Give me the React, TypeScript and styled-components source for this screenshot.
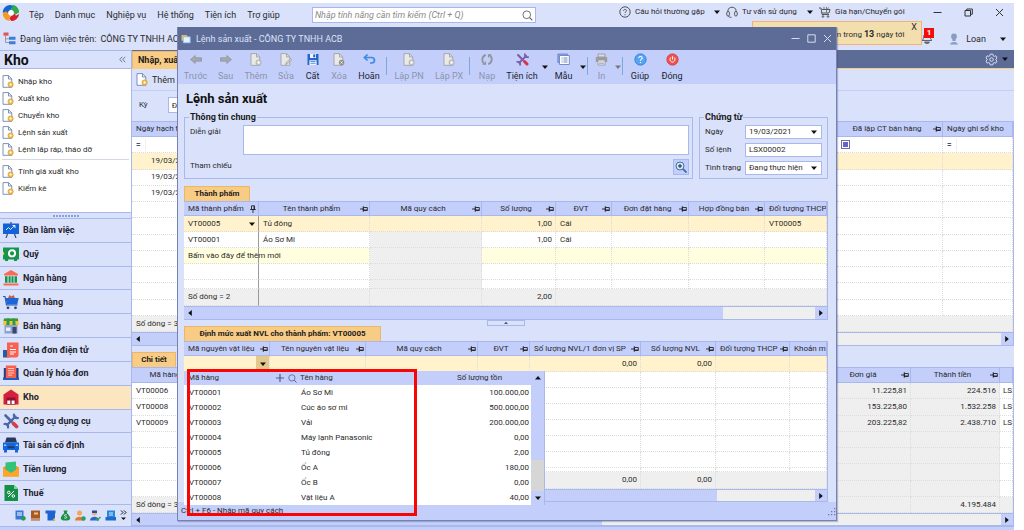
import React from 'react';
import styled, { createGlobalStyle, css } from 'styled-components';

const c = {
  window: '#d9e1fb',
  header: '#c3cffa',
  dark: '#5d6b97',
  line: '#a9b8ea',
  orange: '#f8cc84',
  orangeLine: '#e9b76a',
  yellow: '#fff2cc',
  pale: '#ffffdf',
  grey: '#efefef',
  dot: '#dcdcdc',
  text: '#2b2b2b',
  mute: '#8b93ad',
};

const Global = createGlobalStyle`
  *, *::before, *::after { box-sizing: border-box; }
  body { margin: 0; background: #fff; color: ${c.text}; font: 8px/12px Roboto, "Liberation Sans", sans-serif; }
  button, input, textarea, select { font: inherit; color: inherit; margin: 0; padding: 0; border: 0; border-radius: 0; background: none; outline: 0; }
  svg { display: block; flex: none; }
  a { color: inherit; text-decoration: none; }
`;

/* ---------- window frame ---------- */

const Page = styled.div`
  display: flex;
  min-height: 100vh;
  padding: 3px 10px 0 0;
`;
const Window = styled.div`
  position: relative;
  flex: 1;
  min-width: 0;
  display: flex;
  flex-direction: column;
  background: ${c.window};
  overflow: hidden;
`;
const MenuBar = styled.header`
  display: flex;
  align-items: flex-start;
  height: 24px;
  padding-left: 2px;
  font-size: 9px;
`;
const Menu = styled.nav`
  display: flex;
  gap: 11px;
  padding: 6px 0 0 9px;
`;
const PlainButton = styled.button`
  white-space: nowrap;
  display: flex;
  align-items: center;
`;
const SearchBox = styled.div`
  display: flex;
  align-items: center;
  width: 224px;
  height: 16px;
  margin: 4px 0 0 32px;
  padding: 0 2px;
  background: #fff;
  border: 1px solid ${c.line};
`;
const SearchInput = styled.input`
  flex: 1;
  min-width: 0;
  font-size: 9px;
  font-style: italic;
  &::placeholder { color: #8a8a8a; opacity: 1; }
`;
const MenuRight = styled.div`
  display: flex;
  align-items: center;
  margin-left: auto;
  padding: 2px 10px 0 0;
  font-size: 8px;
`;
const HelpLink = styled.button<{ $w: number }>`
  display: flex;
  align-items: center;
  gap: 4px;
  width: ${p => p.$w}px;
  height: 14px;
  white-space: nowrap;
`;
const Push = styled.span`
  flex: 1;
`;
const WindowKeys = styled.div<{ $gap: number }>`
  display: flex;
  gap: ${p => p.$gap}px;
`;
const ContextBar = styled.div`
  display: flex;
  align-items: center;
  height: 23px;
  padding: 0 8px 0 3px;
  font-size: 9px;
  white-space: nowrap;
`;
const Company = styled.span`
  margin-left: 4px;
`;
const UserButton = styled.button`
  display: flex;
  align-items: center;
  gap: 7px;
  margin-left: 16px;
  font-size: 9px;
`;
const Bell = styled.button`
  position: relative;
  margin-left: auto;
`;
const Badge = styled.b`
  position: absolute;
  top: -4px;
  left: 3px;
  width: 10px;
  height: 10px;
  background: #f20d0d;
  color: #fff;
  font-size: 8px;
  line-height: 10px;
  text-align: center;
`;
const Notice = styled.div`
  position: absolute;
  top: 18px;
  right: 92px;
  display: flex;
  justify-content: flex-end;
  gap: 7px;
  width: 170px;
  height: 24px;
  padding: 0 4px;
  background: #f3dfae;
  border: 1px solid #f3b27a;
  white-space: nowrap;
`;
const NoticeText = styled.span`
  padding-top: 6px;
  b { font-size: 9px; }
`;
const NoticeClose = styled.button`
  height: 10px;
  font-size: 9px;
  line-height: 10px;
`;
const Body = styled.div`
  flex: 1;
  display: flex;
`;
const BottomEdge = styled.div`
  height: 4px;
  background: ${c.header};
  border-top: 1px solid ${c.line};
`;

/* ---------- sidebar ---------- */

const Sidebar = styled.aside`
  display: flex;
  flex-direction: column;
  width: 132px;
  flex: none;
  border-right: 1px solid ${c.line};
`;
const SideTitle = styled.div`
  display: flex;
  align-items: center;
  justify-content: space-between;
  height: 19px;
  padding: 0 5px 0 4px;
  border-bottom: 1px solid ${c.line};
  border-top: 1px solid ${c.line};
  color: #111;
  h2 { margin: 0; font-size: 14px; line-height: 16px; }
`;
const SideList = styled.ul`
  list-style: none;
  height: 144px;
  margin: 0;
  padding: 4px 2px;
  background: #fff;
  border-bottom: 1px solid ${c.line};
`;
const SideItem = styled.li<{ $rule?: boolean }>`
  ${p => p.$rule && css`margin-top: 1px; padding-top: 3px; border-top: 1px solid #d5d8e2;`}
  a { display: flex; align-items: center; gap: 4px; height: 17px; }
`;
const Grip = styled.div`
  display: flex;
  align-items: center;
  justify-content: center;
  height: 5px;
  &::after { content: ''; width: 26px; height: 2px; background: repeating-linear-gradient(90deg, #8aa0de 0 2px, transparent 2px 3px); }
`;
const Modules = styled.nav`
  flex: 1;
  display: flex;
  flex-direction: column;
`;
const ModuleLink = styled.a<{ $on?: boolean }>`
  flex: 1;
  display: flex;
  align-items: center;
  gap: 4px;
  min-height: 20px;
  padding-left: 3px;
  border-top: 1px solid ${c.line};
  background: ${p => (p.$on ? '#fce6bf' : 'transparent')};
  color: #1f2330;
  font-size: 9px;
  font-weight: 700;
`;
const Shortcuts = styled.div`
  display: flex;
  align-items: center;
  gap: 4px;
  height: 22px;
  padding-left: 15px;
  border-top: 1px solid ${c.line};
`;

/* ---------- main list behind the dialog ---------- */

const Main = styled.main`
  flex: 1;
  min-width: 0;
  display: flex;
  flex-direction: column;
`;
const TabStrip = styled.div`
  display: flex;
  align-items: flex-end;
  height: 19px;
  background: ${c.dark};
  border-bottom: 1px solid ${c.orange};
`;
const Tab = styled.button<{ $w: number; $tall?: boolean }>`
  width: ${p => p.$w}px;
  height: ${p => (p.$tall ? 17 : 15)}px;
  padding: 0 5px;
  background: ${c.orange};
  border: 1px solid ${c.orangeLine};
  border-bottom: 0;
  color: #1c1c1c;
  font-size: ${p => (p.$tall ? 9 : 8)}px;
  font-weight: 700;
  text-align: ${p => (p.$tall ? 'left' : 'center')};
  white-space: nowrap;
`;
const TabGear = styled.button`
  display: flex;
  align-items: center;
  gap: 4px;
  height: 18px;
  margin-left: auto;
  padding-right: 6px;
  color: #dfe6fb;
`;
const MainTools = styled.div`
  display: flex;
  align-items: center;
  height: 22px;
  padding-left: 4px;
  border-bottom: 1px solid ${c.header};
  font-size: 9px;
`;
const Period = styled.div`
  display: flex;
  align-items: center;
  gap: 20px;
  height: 30px;
  padding: 0 7px 2px;
  font-size: 8px;
`;
const PeriodInput = styled.input`
  width: 90px;
  height: 16px;
  padding: 0 3px;
  background: #fff;
  border: 1px solid ${c.line};
`;
const MainTabs = styled.div`
  height: 21px;
  padding-top: 6px;
`;

/* ---------- grids ---------- */

const Grid = styled.table<{ $h?: number }>`
  width: 100%;
  ${p => p.$h && css`height: ${p.$h}px;`}
  table-layout: fixed;
  border-collapse: separate;
  border-spacing: 0;
  background: #fff;
  border-right: 1px solid ${c.line};
`;
const Col = styled.col<{ $w?: number }>`
  ${p => p.$w && css`width: ${p.$w}px;`}
`;
const Row = styled.tr<{ $tone?: string; $h?: number }>`
  height: ${p => p.$h ?? 16}px;
  background: ${p => p.$tone ?? 'transparent'};
`;
const Th = styled.th`
  height: inherit;
  padding: 0 1px 0 4px;
  background: ${c.header};
  border-right: 1px solid ${c.line};
  border-bottom: 1px solid ${c.line};
  border-top: 1px solid ${c.line};
  font-weight: 400;
  overflow: hidden;
  white-space: nowrap;
`;
const ThInner = styled.div<{ $left?: boolean }>`
  display: flex;
  align-items: center;
  span { flex: 1; text-align: ${p => (p.$left ? 'left' : 'center')}; }
`;
const Td = styled.td<{ $right?: boolean; $shade?: boolean; $frozen?: boolean; $indent?: boolean }>`
  height: inherit;
  padding: 0 3px 0 ${p => (p.$indent ? 19 : 4)}px;
  border-right: 1px dotted ${c.dot};
  border-bottom: 1px dotted ${c.dot};
  line-height: 12px;
  text-align: ${p => (p.$right ? 'right' : 'left')};
  white-space: nowrap;
  ${p => p.$shade && css`background: ${c.grey};`}
  ${p => p.$frozen && css`border-right: 1px solid #9a9a9a;`}
`;
const EdgeTd = styled(Td)`
  padding: 0 0 0 3px;
`;
const DropTd = styled(Td)`
  padding: 0;
`;
const CellCombo = styled.div`
  display: flex;
  align-items: center;
  justify-content: space-between;
`;
const DropCell = styled.button`
  display: flex;
  align-items: center;
  justify-content: center;
  width: 13px;
  height: 15px;
  margin-left: auto;
  background: #e3c98d;
`;
const FilterMark = styled.span`
  display: inline-block;
  width: 10px;
  border-right: 1px solid ${c.grey};
  color: #4b4b86;
  font-weight: 700;
`;
const TriCheck = styled.input`
  appearance: none;
  display: block;
  width: 9px;
  height: 9px;
  border: 1px solid #6d6da8;
  box-shadow: inset 0 0 0 1px #fff;
  background: #6464c8;
`;
const Bar = styled.div<{ $h: number }>`
  display: flex;
  height: ${p => p.$h}px;
  background: ${c.grey};
  border: 1px solid ${c.line};
  border-left: 0;
`;
const BarKey = styled.button`
  display: flex;
  align-items: center;
  justify-content: center;
  width: 12px;
  background: ${c.header};
`;
const Thumb = styled.div<{ $share: number }>`
  width: ${p => p.$share}%;
  background: ${c.header};
`;

/* ---------- dialog ---------- */

const Dialog = styled.section`
  position: absolute;
  top: 24px;
  left: 177px;
  right: 177px;
  background: ${c.window};
  border: 1px solid #7482b4;
  border-top: 0;
  box-shadow: 1px 1px 1px rgba(60, 70, 110, 0.3);
`;
const TitleBar = styled.div`
  display: flex;
  align-items: center;
  gap: 5px;
  height: 23px;
  padding: 0 4px 0 3px;
  background: ${c.dark};
  color: #dbe2f8;
  font-size: 9px;
`;
const Tools = styled.div`
  display: flex;
  height: 34px;
  padding-left: 2px;
  background: ${c.header};
`;
const Tool = styled.button<{ $w: number }>`
  display: flex;
  flex-direction: column;
  align-items: center;
  gap: 4px;
  width: ${p => p.$w}px;
  padding-top: 3px;
  font-size: 9px;
  white-space: nowrap;
  color: #20242e;
  &:disabled { color: ${c.mute}; }
`;
const ToolArrow = styled.button`
  display: flex;
  align-items: center;
  justify-content: center;
  width: 7px;
`;
const ToolRule = styled.span`
  width: 1px;
  height: 18px;
  margin: 7px 1px 0;
  background: #7ba8de;
`;
const Content = styled.div`
  padding: 0 8px 0 6px;
`;
const Heading = styled.h1`
  margin: 0;
  padding: 7px 2px 5px;
  color: #111;
  font-size: 13px;
  line-height: 16px;
`;
const Form = styled.div`
  display: flex;
  gap: 6px;
  margin-bottom: 7px;
`;
const Group = styled.fieldset<{ $w?: number }>`
  ${p => (p.$w ? css`width: ${p.$w}px;` : css`flex: 1;`)}
  min-width: 0;
  height: 67px;
  margin: 0;
  padding: 3px ${p => (p.$w ? 5 : 3)}px 0 5px;
  border: 1px solid ${c.line};
  legend { padding: 0 1px; margin-left: -1px; color: #1c1c1c; font-size: 9px; font-weight: 700; line-height: 10px; }
`;
const Field = styled.div<{ $w: number }>`
  display: flex;
  margin-bottom: 4px;
  label, > span { width: ${p => p.$w}px; line-height: 14px; white-space: nowrap; }
`;
const Memo = styled.textarea`
  flex: 1;
  height: 30px;
  resize: none;
  background: #fff;
  border: 1px solid ${c.line};
`;
const Lookup = styled.button`
  display: flex;
  align-items: center;
  justify-content: center;
  width: 16px;
  height: 16px;
  margin-left: auto;
  background: ${c.header};
  border: 1px solid ${c.line};
`;
const Combo = styled.div`
  display: flex;
  flex: 1;
  align-items: center;
  height: 14px;
  min-width: 0;
  padding-right: 4px;
  background: #fff;
  border: 1px solid ${c.line};
  input, select { flex: 1; width: 100%; min-width: 0; height: 12px; padding: 0 3px; appearance: none; }
`;
const Splitter = styled.div`
  display: flex;
  justify-content: center;
  height: 6px;
`;
const SplitKey = styled.button`
  display: flex;
  align-items: center;
  justify-content: center;
  width: 38px;
  height: 6px;
  border: 1px solid ${c.line};
`;
const TabRow = styled.div`
  display: flex;
  height: 15px;
`;
const Hint = styled.div`
  display: flex;
  align-items: center;
  justify-content: space-between;
  height: 18px;
  padding-left: 3px;
  background: ${c.header};
`;
const Popup = styled.div`
  position: absolute;
  top: 344px;
  left: 6px;
  display: flex;
  width: 361px;
  background: #fff;
  border-right: 1px solid ${c.line};
`;
const PopTable = styled.table`
  flex: 1;
  table-layout: fixed;
  border-spacing: 0;
  th { height: 14px; padding: 0 0 0 4px; background: ${c.header}; font-weight: 400; text-align: left; }
  td { height: 15px; padding: 0 2px 0 5px; line-height: 12px; white-space: nowrap; }
  th:first-child { padding-right: 3px; }
  th:nth-child(2) { padding-left: 0; }
  td:nth-child(2) { padding-left: 1px; }
  th:last-child { padding: 0; text-align: center; }
  td:last-child { text-align: right; }
`;
const PopHead = styled.div`
  display: flex;
  align-items: center;
  gap: 4px;
  span { flex: 1; }
`;
const PopBar = styled.div`
  display: flex;
  flex-direction: column;
  width: 13px;
  background: ${c.header};
`;
const PopKey = styled.button`
  display: flex;
  align-items: center;
  justify-content: center;
  height: 14px;
`;
const PopTrack = styled.div`
  height: 31px;
  margin-top: auto;
  background: #d6d6d6;
`;
const Highlight = styled.div`
  position: absolute;
  top: 342px;
  left: 9px;
  width: 230px;
  height: 147px;
  border: 3px solid #fa0505;
  pointer-events: none;
`;

/* ---------- glyphs ---------- */

type Dir = 'down' | 'up' | 'left' | 'right';
const Tri = ({ dir = 'down', color = '#111', small }: { dir?: Dir; color?: string; small?: boolean }) => {
  const d = { down: 'M0 1.5h6L3 5z', up: 'M0 4.5h6L3 1z', left: 'M4.8 0v6L1.2 3z', right: 'M1.2 0v6L4.8 3z' }[dir];
  const s = small ? 4 : 6;
  return <svg width={s} height={s} viewBox="0 0 6 6"><path d={d} fill={color} /></svg>;
};
const Pin = ({ up }: { up?: boolean }) => (
  <svg width="8" height="8" viewBox="0 0 8 8" fill="none" stroke="#222" strokeWidth="0.9">
    {up ? <path d="M2.5.8h3v3.7h-3zM1.2 4.5h5.6M4 4.5V8M5 1v3" /> : <path d="M3.3 2.5h4v3h-4zM3.3 1.2v5.6M3.3 4H0M3.5 5h3.8" />}
  </svg>
);
const Magnifier = ({ size = 11, color = '#666' }: { size?: number; color?: string }) => (
  <svg width={size} height={size} viewBox="0 0 12 12" fill="none" stroke={color}><circle cx="5.2" cy="5.2" r="4.2" /><path d="M8.3 8.3l3 3" strokeWidth="1.3" /></svg>
);
const Logo = () => (
  <svg width="18" height="20" viewBox="0 0 20 20">
    <path d="M9 1C4 1.500 1 5 .8 9.500L7 10c0-2 .8-3 2.500-3.400L13 2z" fill="#1565c8" />
    <path d="M12 1.200c4 .6 7 4 7 8L15 12 13 9c0-1-.8-2-3-2.500z" fill="#2daa4a" />
    <path d="M19 11c-.5 4-4 8-8.500 8L8 16l2.500-3.200c2 0 2.600-1 2.700-3L15.500 13z" fill="#d9202c" />
    <path d="M9 19C4.500 18.600 1 15 .8 10.800L4.500 8l2.800 3.200C7.500 12 8.500 13 10 13l-2.600 3z" fill="#f79a1c" />
    <circle cx="10" cy="9.900" r="2.900" fill="#fff" />
  </svg>
);
const Doc = ({ mark = 'gear', grey }: { mark?: 'gear' | 'pen' | 'x'; grey?: boolean }) => (
  <svg width="12" height="13" viewBox="0 0 12 13">
    <path d="M1 .6h5.500L9.800 4v8.300H1z" fill={grey ? '#e9e9e6' : '#fff'} stroke={grey ? '#a0a2a8' : '#6f86b4'} strokeWidth=".9" />
    <path d="M6.500.6V4h3.300" fill="none" stroke={grey ? '#a0a2a8' : '#6f86b4'} strokeWidth=".9" />
    {mark === 'gear' && <g><circle cx="8.600" cy="9.500" r="2.600" fill={grey ? '#d8d8d8' : '#f5c75a'} stroke={grey ? '#a5a5a5' : '#d69c2c'} strokeWidth=".8" /><circle cx="8.600" cy="9.500" r=".9" fill="#fff" /></g>}
    {mark === 'pen' && <path d="M5.500 11.500l.6-2 4.500-4 1.200 1.300-4.500 4z" fill="#cfcfcf" stroke="#999" strokeWidth=".7" />}
    {mark === 'x' && <g><circle cx="8.600" cy="9.500" r="2.700" fill="#8f8f8f" /><path d="M7.500 8.400l2.200 2.200M9.700 8.400l-2.200 2.200" stroke="#fff" strokeWidth=".8" /></g>}
  </svg>
);
const Arrow = ({ back }: { back?: boolean }) => (
  <svg width="12" height="13" viewBox="0 0 12 13"><path d={back ? 'M.5 6.500l4.700-4v2.300h6.300v3.400H5.200v2.300z' : 'M11.500 6.500l-4.700-4v2.300H.5v3.400h6.300v2.300z'} fill="#a5a8ae" stroke="#8d9096" strokeWidth=".7" /></svg>
);
const Disk = () => (
  <svg width="12" height="13" viewBox="0 0 12 13"><path d="M.5 1h11v11H.5z" fill="#2467c7" /><path d="M3 1h6v4H3zM2.400 7.200h7.200V12H2.400z" fill="#eef4ff" /><path d="M6.600 1.700h1.300v2.400H6.600zM3.500 8.500h5M3.500 10.300h5" fill="#2467c7" stroke="#2467c7" strokeWidth=".7" /></svg>
);
const Undo = () => (
  <svg width="13" height="13" viewBox="0 0 13 13" fill="none" stroke="#3d8ae6" strokeWidth="1.700"><path d="M2 4.500h6.500c4 0 4 5.500 0 5.500H7" /><path d="M4.600 1.500L1.400 4.500l3.200 3" /></svg>
);
const Reload = () => (
  <svg width="12" height="13" viewBox="0 0 12 13" fill="none" stroke="#8f949c" strokeWidth="1.800"><path d="M4.800 1.800C.2 3.500.4 9.300 3.800 10.800M7.200 11.200C11.800 9.500 11.600 3.700 8.200 2.200" /><path d="M1.500 11.300h3V8.500M10.500 1.700h-3v2.800" strokeWidth="1.100" /></svg>
);
const Wrench = ({ size = 13, a = '#7a5fa8', b = '#d6334a' }: { size?: number; a?: string; b?: string }) => (
  <svg width={size} height={size} viewBox="0 0 16 16" fill="none" strokeLinecap="round"><path d="M12.500 3.500L4 12" stroke={a} strokeWidth="2.400" /><path d="M11 1.500c-.5 3 1.500 4 4 3.500M1.500 11c2.600-.5 4 .8 3.500 3.500" stroke={a} strokeWidth="2.200" /><path d="M2.500 2.500l6 6" stroke={a} strokeWidth="2.600" /><path d="M10.500 10.500l3 3" stroke={b} strokeWidth="3.800" /></svg>
);
const Template = () => (
  <svg width="13" height="13" viewBox="0 0 13 13"><path d="M.8 1h9.600v8.500H.8z" fill="#8fa6de" stroke="#6a82c4" strokeWidth=".8" /><path d="M2.500 2.500h9.800V11.500H2.500z" fill="#fff" stroke="#6a82c4" strokeWidth=".9" /><path d="M4.500 5h1M6.500 5h4M4.500 7h1M6.500 7h4M4.500 9h1M6.500 9h4" stroke="#5c78c0" strokeWidth=".9" /></svg>
);
const Printer = () => (
  <svg width="13" height="13" viewBox="0 0 13 13"><path d="M3 1h7v3H3z" fill="#ddd" stroke="#8f9299" strokeWidth=".8" /><path d="M.8 4h11.400v5H.8z" fill="#9a9da3" /><path d="M3 7h7v5H3z" fill="#eee" stroke="#8f9299" strokeWidth=".8" /><path d="M4 9h5M4 10.500h5" stroke="#8f9299" strokeWidth=".6" /></svg>
);
const RoundIcon = ({ kind }: { kind: 'help' | 'close' }) => (
  <svg width="13" height="13" viewBox="0 0 13 13" fill="none" stroke="#fff"><circle cx="6.500" cy="6.500" r="5.600" fill={kind === 'help' ? '#5aa5f2' : '#ee5350'} stroke={kind === 'help' ? '#2f7fd8' : '#d63c3c'} />
    {kind === 'help' ? <path d="M4.800 5c.2-2 3.500-1.900 3.400 0 0 1.200-1.700 1.200-1.700 2.700M6.500 9v1" strokeWidth="1.100" /> : <path d="M6.500 3.300v3.200M4.700 4.500c-1.800 2 .2 4.600 1.800 4.600S10 6.500 8.300 4.500" strokeWidth="1" />}</svg>
);
const QMark = () => (
  <svg width="12" height="12" viewBox="0 0 12 12" fill="none" stroke="#555"><circle cx="6" cy="6" r="5.200" /><path d="M4.500 4.700c.1-1.700 3.100-1.600 3 0 0 1-1.500 1.100-1.500 2.300M6 8.200v1" /></svg>
);
const Headset = () => (
  <svg width="12" height="12" viewBox="0 0 12 12" fill="none" stroke="#555"><path d="M2 6V4.500C2 .2 10 .2 10 4.500V6" /><rect x=".8" y="5.500" width="2.600" height="4.500" rx="1.200" /><rect x="8.600" y="5.500" width="2.600" height="4.500" rx="1.200" /><path d="M2.500 10c.3 1 1.500 1.400 3 1.400" /></svg>
);
const Cart = () => (
  <svg width="12" height="12" viewBox="0 0 12 12" fill="none" stroke="#555"><path d="M0 2h2l1 6.500h7M3 3.500h8L10 7H3" /><path d="M5 .8v2.700M7.500.8v6M9.500 1.500l-1 1.500" strokeWidth=".7" /><circle cx="4" cy="10.500" r=".8" /><circle cx="9" cy="10.500" r=".8" /></svg>
);
type KeyKind = 'min' | 'max' | 'restore' | 'close';
const WinGlyph = ({ kind, color }: { kind: KeyKind; color: string }) => (
  <svg width="9" height="9" viewBox="0 0 9 9" fill="none" stroke={color}>
    {kind === 'min' && <path d="M.5 4.500h8" />}
    {kind === 'max' && <path d="M.8.8h7.400v7.400H.8z" />}
    {kind === 'restore' && <path d="M1 2.500h5.500v5.500H1zM2.800 2.500V1h5.500v5.200H6.500" />}
    {kind === 'close' && <path d="M1 1l7 7M8 1L1 8" />}
  </svg>
);
const OrgTree = () => (
  <svg width="13" height="13" viewBox="0 0 13 13"><path d="M.5.5h5v3.200h-5z" fill="#e0574c" /><path d="M2.500 4v6.500H6M2.500 6.800H6" fill="none" stroke="#888" strokeWidth=".8" /><path d="M6 4.800h6.500v3H6zM6 9.300h6.500v3H6z" fill="#3d7fd6" /></svg>
);
const BellIcon = () => (
  <svg width="12" height="13" viewBox="0 0 12 13" fill="none" stroke="#666"><path d="M1 8.500c1.500-1 1.500-2 1.500-4C2.500 1 9.500 1 9.500 4.500c0 2 0 3 1.500 4z" /><path d="M3.500 10c1 2 4 2 5 0z" fill="#666" /></svg>
);
const Person = () => (
  <svg width="10" height="12" viewBox="0 0 10 12" fill="#8b9cc4"><circle cx="5" cy="3.500" r="2.900" /><path d="M3.400 5h3.200v3H3.400zM1 11.500C1 8 9 8 9 11.500z" /></svg>
);
const Gear = () => (
  <svg width="13" height="13" viewBox="0 0 24 24" fill="none" stroke="currentColor" strokeWidth="1.700"><path d="M9.700 2h4.600l.7 3 2 1.200 3-1 2.200 4-2.200 2v1.600l2.200 2-2.200 4-3-1-2 1.200-.7 3H9.700L9 19l-2-1.200-3 1-2.200-4 2.200-2v-1.600l-2.200-2 2.200-4 3 1L9 5z" /><circle cx="12" cy="12" r="3.300" /></svg>
);
const FormIcon = () => (
  <svg width="10" height="10" viewBox="0 0 9 9"><path d="M.5 1h5v5h-5z" fill="#f3c34d" /><path d="M2 2.500h6.300V8H2z" fill="#e6f0ff" stroke="#7fb3ef" strokeWidth=".7" /></svg>
);
const Plus = () => (
  <svg width="8" height="8" viewBox="0 0 8 8" stroke="#4c5a8c" strokeWidth="1.200"><path d="M4 0v8M0 4h8" /></svg>
);
const Resize = () => (
  <svg width="9" height="9" viewBox="0 0 9 9" fill="#6d7aa8"><path d="M7 1h1.300v1.300H7zM4 4h1.300v1.300H4zM7 4h1.300v1.300H7zM1 7h1.300v1.300H1zM4 7h1.300v1.300H4zM7 7h1.300v1.300H7z" /></svg>
);
const Chevrons = () => (
  <svg width="7" height="7" viewBox="0 0 7 7" fill="none" stroke="#5d6b97" strokeWidth=".9"><path d="M3.200.8L.8 3.500l2.400 2.700M6.200.8L3.800 3.500l2.400 2.700" /></svg>
);

const moduleArt: Record<string, React.ReactNode> = {
  desk: <><path d="M0 1.500h16v10.500H0z" fill="#1263d8" /><path d="M8 0v2M4.500 12l-1.500 4M11.500 12l1.500 4" stroke="#3b4a78" strokeWidth="1.200" /><path d="M3 8l2.500-2.500 2 2 2-2 2.500-2M9.500 3.500H12V6" stroke="#fff" fill="none" strokeWidth=".9" /></>,
  safe: <><path d="M0 1.500h16v12H0zM2 13.500h3V15H2zM11 13.500h3V15h-3z" fill="#15954b" /><path d="M0 5.500v4l1.500-2z" fill="#f6d32b" /><circle cx="9" cy="7.300" r="3.100" fill="none" stroke="#fff" strokeWidth="1.900" /></>,
  bank: <><path d="M8 0l7 4v1.500H1V4z" fill="#fb6b52" /><path d="M2 6.300h2.500v6.500H2zM5.600 6.300h2v6.500h-2zM8.500 6.300h2v6.500h-2zM11.500 6.300H14v6.500h-2.500z" fill="#15954b" /><path d="M.5 13.500h15v2H.5z" fill="#fb6b52" /></>,
  cart: <><path d="M5 4l1.500-3 2 1.500L10.500 1l1.500 3z" fill="#c0623f" /><path d="M-.5 2.500h2.500l1.500 8.500h11" stroke="#2c58a8" fill="none" strokeWidth="1.200" /><path d="M2.500 4h13.200l-1.500 6.500H3.800z" fill="#1c66dc" /><circle cx="5" cy="13.800" r="1.400" fill="#31436e" /><circle cx="12.500" cy="13.800" r="1.400" fill="#31436e" /></>,
  shop: <><path d="M1.500 7h13v8.500h-13z" fill="#8fa3cf" /><path d="M9.500 9h4v6.500h-4z" fill="#3a456e" /><path d="M3 9.500h4.500v3.500H3z" fill="#e7ecfa" /><path d="M1 .5h14l1 6.500H0z" fill="#f9c22b" /><path d="M1 .5h14v2.500H.6z" fill="#2a9a4e" /><path d="M4 .5h2.500V7H3.300zM9.500.5H12L12.700 7H9.500z" fill="#2a9a4e" /></>,
  einvoice: <><path d="M0 8h6v7.500H0z" fill="#1f5fa8" /><path d="M4 .5h11.500v12.500c0 3-3 2.500-5 2.500H4z" fill="#f9604f" /><path d="M7 4h3M7 7.500h6M7 10h6M7 12h4" stroke="#fff" strokeWidth="1" /></>,
  invoices: <><path d="M0 12.500h16V15H0z" fill="#1c5fbf" /><path d="M.8 3h3v10h-3zM12.500 3h3v10h-3z" fill="#1f3f85" /><path d="M2.800.5h10.500v12.500H2.800z" fill="#f9604f" /><path d="M5 3.500h6M5 5.700h6M5 8h6M5 10.200h4" stroke="#ffd3cc" strokeWidth=".9" /></>,
  store: <><path d="M8 .5l7.500 5V15.500H.5V5.500z" fill="#d61f3c" /><path d="M3.500 8.500h9v7h-9z" fill="#8e1230" /><path d="M4.300 11.500h3V15h-3zM8.600 11.500h3V15h-3z" fill="#fff" /></>,
  car: <><path d="M3.500.5h9L14 5.500H2z" fill="#28395e" /><path d="M0 5.500h16v7.500H0zM1 13h3v2.500H1zM12 13h3v2.500h-3z" fill="#1166e0" /><path d="M4.500 9.300h7v2h-7z" fill="#28395e" /><path d="M1 7.500h2.300v1.500H1zM12.700 7.500H15V9h-2.300z" fill="#9fd0ff" /></>,
  pay: <><path d="M0 6.500L8 2l8 4.500v9H0z" fill="#f6941f" /><path d="M2.500 1.500L13 .5v8.500l-5 3-5.500-3z" fill="#32c279" /><path d="M0 7l8 5 8-5v8.500H0z" fill="#fba52a" /></>,
  tax: <><path d="M1.500 0h9.500l4 4v12H1.500z" fill="#159049" /><path d="M11 0l4 4h-4z" fill="#7fd3a1" /><path d="M5 12l6-6" stroke="#fff" /><circle cx="5.800" cy="7.500" r="1.300" fill="none" stroke="#fff" /><circle cx="10.300" cy="11" r="1.300" fill="none" stroke="#fff" /></>,
};
const ModuleIcon = ({ name }: { name: string }) =>
  name === 'tools' ? <Wrench size={16} a="#4c67a6" b="#d2404e" /> : <svg width="16" height="16" viewBox="0 0 16 16">{moduleArt[name]}</svg>;

const shortcutArt: React.ReactNode[] = [
  <><path d="M.5.5h8v9h-8z" fill="#3a78d8" /><path d="M2 3h5M2 5h5" stroke="#fff" /><circle cx="8.300" cy="8.300" r="2.400" fill="#239b58" /></>,
  <><path d="M1 .5h9v10H1z" fill="#a55a2a" /><path d="M4 2.500h4v2H4z" fill="#f4c869" /><path d="M1 9h9" stroke="#e8c9a5" /></>,
  <><path d="M.5.5h10v3H.5zM2.500 3.500h7.500v7H2.500z" fill="#1b63cf" /><path d="M7 10.500l3-3v3z" fill="#f4b82b" /></>,
  <><path d="M3.500.5h4L6.800 3C12 8 11 10.500 5.500 10.500S-1 8 4.200 3z" fill="#1c8f4b" /><path d="M6.800 5c-1.300-.8-2.600-.4-2.400.6s2.300.6 2.300 1.700-1.400 1.200-2.500.5" stroke="#fff" strokeWidth=".8" fill="none" /></>,
  <><circle cx="4.500" cy="3" r="2.500" fill="#f2a65a" /><path d="M0 10.500C0 5.500 9 5.500 9 10.500z" fill="#e77a2f" /><circle cx="8.500" cy="8.500" r="2.200" fill="#29a05f" /></>,
  <><circle cx="4.500" cy="3" r="2.500" fill="#e8b07e" /><path d="M2 .5h5V3H2z" fill="#2c4f96" /><path d="M0 10.500C0 5.500 9 5.500 9 10.500z" fill="#2a67c7" /><path d="M6 8.500l1.500 1.500 3-3" stroke="#2aa35e" strokeWidth="1.400" fill="none" /></>,
  <><path d="M2 .5h8v6.500H2z" fill="#2a86dd" /><path d="M.5 7h10.500v3.500H.5z" fill="#1a6ccc" /><path d="M4 3h4M4 5h4" stroke="#fff" strokeWidth=".8" /></>,
];

/* ---------- data ---------- */

const sideItems = ['Nhập kho', 'Xuất kho', 'Chuyển kho', 'Lệnh sản xuất', 'Lệnh lắp ráp, tháo dỡ', 'Tính giá xuất kho', 'Kiểm kê'];
const modules: [string, string][] = [
  ['desk', 'Bàn làm việc'], ['safe', 'Quỹ'], ['bank', 'Ngân hàng'], ['cart', 'Mua hàng'], ['shop', 'Bán hàng'],
  ['einvoice', 'Hóa đơn điện tử'], ['invoices', 'Quản lý hóa đơn'], ['store', 'Kho'], ['tools', 'Công cụ dụng cụ'],
  ['car', 'Tài sản cố định'], ['pay', 'Tiền lương'], ['tax', 'Thuế'],
];
const stock: [string, string, string][] = [
  ['VT00001', 'Áo Sơ Mi', '100.000,00'], ['VT00002', 'Cúc áo sơ mi', '500.000,00'], ['VT00003', 'Vải', '200.000,00'],
  ['VT00004', 'Máy lạnh Panasonic', '0,00'], ['VT00005', 'Tủ đông', '2,00'], ['VT00006', 'Ốc A', '180,00'],
  ['VT00007', 'Ốc B', '0,00'], ['VT00008', 'Vật liệu A', '40,00'],
];
const detail: [string, string, string][] = [
  ['VT00006', '11.225,81', '224.516'], ['VT00008', '153.225,80', '1.532.258'], ['VT00009', '203.225,82', '2.438.710'],
];
const blanks = (n: number) => Array.from({ length: n }, (_, i) => i);

const Head = ({ label, left, pin = true, up }: { label?: string; left?: boolean; pin?: boolean; up?: boolean }) => (
  <Th><ThInner $left={left}><span>{label}</span>{pin && <Pin up={up} />}</ThInner></Th>
);
const ScrollBar = ({ share, h }: { share: number; h: number }) => (
  <Bar $h={h}><BarKey aria-label="Cuộn trái"><Tri dir="left" /></BarKey><Thumb $share={share} /><Push /><BarKey aria-label="Cuộn phải"><Tri dir="right" /></BarKey></Bar>
);

/* ---------- sections ---------- */

const TopBars = () => (
  <>
    <MenuBar>
      <Logo />
      <Menu>{['Tệp', 'Danh mục', 'Nghiệp vụ', 'Hệ thống', 'Tiện ích', 'Trợ giúp'].map(m => <PlainButton key={m}>{m}</PlainButton>)}</Menu>
      <SearchBox><SearchInput aria-label="Tìm kiếm" placeholder="Nhập tính năng cần tìm kiếm (Ctrl + Q)" /><Magnifier /></SearchBox>
      <MenuRight>
        <HelpLink $w={107}><QMark />Câu hỏi thường gặp<Push /><Tri /><Push /></HelpLink>
        <HelpLink $w={93}><Headset />Tư vấn sử dụng<Push /><Tri /><Push /></HelpLink>
        <HelpLink $w={114}><Cart />Gia hạn/Chuyển gói</HelpLink>
        <WindowKeys $gap={22}>
          <PlainButton aria-label="Thu nhỏ"><WinGlyph kind="min" color="#333" /></PlainButton>
          <PlainButton aria-label="Khôi phục"><WinGlyph kind="restore" color="#333" /></PlainButton>
          <PlainButton aria-label="Đóng"><WinGlyph kind="close" color="#333" /></PlainButton>
        </WindowKeys>
      </MenuRight>
    </MenuBar>
    <ContextBar>
      <OrgTree />
      <Company>Đang làm việc trên:</Company><Company>CÔNG TY TNHH ACB</Company>
      <Bell aria-label="Thông báo"><BellIcon /><Badge>1</Badge></Bell>
      <UserButton><Person />Loan<Push /><Tri /></UserButton>
    </ContextBar>
    <Notice><NoticeText>n trong <b>13</b> ngày tới</NoticeText><NoticeClose aria-label="Đóng thông báo">X</NoticeClose></Notice>
  </>
);

const SidePanel = () => (
  <Sidebar>
    <SideTitle><h2>Kho</h2><Chevrons /></SideTitle>
    <SideList>{sideItems.map((t, i) => <SideItem key={t} $rule={i === 5}><a href="#"><Doc />{t}</a></SideItem>)}</SideList>
    <Grip />
    <Modules>{modules.map(([icon, t]) => <ModuleLink key={t} href="#" $on={t === 'Kho'}><ModuleIcon name={icon} />{t}</ModuleLink>)}</Modules>
    <Shortcuts>
      {shortcutArt.map((art, i) => <svg key={i} width="11" height="11" viewBox="0 0 11 11">{art}</svg>)}
      <svg width="7" height="11" viewBox="0 0 7 11"><path d="M1 .5l2 2-2 2M4 .5l2 2-2 2" fill="none" stroke="#111" /><path d="M1 7.500h5L3.500 10z" fill="#111" /></svg>
    </Shortcuts>
  </Sidebar>
);

const MainList = () => (
  <Main>
    <TabStrip><Tab $w={90} $tall>Nhập, xuất kho</Tab><TabGear aria-label="Tùy chọn"><Gear /><Tri /></TabGear></TabStrip>
    <MainTools><HelpLink $w={60}><Doc />Thêm</HelpLink></MainTools>
    <Period><label htmlFor="period">Kỳ</label><PeriodInput id="period" defaultValue="Đầu năm" /></Period>
    <Grid $h={211}>
      <colgroup><Col $w={90} /><Col /><Col $w={106} /><Col $w={70} /></colgroup>
      <thead><Row><Head label="Ngày hạch toán" left /><Head pin={false} /><Head label="Đã lập CT bán hàng" /><Head label="Ngày ghi sổ kho" left pin={false} /></Row></thead>
      <tbody>
        <Row><Td><FilterMark>=</FilterMark></Td><Td /><Td><TriCheck type="checkbox" aria-label="Lọc" /></Td><Td><FilterMark>=</FilterMark></Td></Row>
        {blanks(10).map(i => <Row key={i} $tone={i === 0 ? c.yellow : undefined}><Td $indent>{i < 3 && '19/03/2021'}</Td><Td /><Td /><Td /></Row>)}
      </tbody>
      <tfoot><Row $tone={c.grey}><Td>Số dòng = 3</Td><Td colSpan={3} /></Row></tfoot>
    </Grid>
    <ScrollBar share={54} h={14} />
    <MainTabs><Tab $w={44}>Chi tiết</Tab></MainTabs>
    <Grid $h={146}>
      <colgroup><Col $w={64} /><Col /><Col $w={90} /><Col $w={89} /><Col $w={13} /></colgroup>
      <thead><Row><Head label="Mã hàng" pin={false} /><Head pin={false} /><Head label="Đơn giá" /><Head label="Thành tiền" /><Head pin={false} /></Row></thead>
      <tbody>
        {blanks(7).map(i => (
          <Row key={i}><Td>{detail[i]?.[0]}</Td><Td /><Td $shade $right>{detail[i]?.[1]}</Td><Td $shade $right>{detail[i]?.[2]}</Td><EdgeTd>{detail[i] && 'LS'}</EdgeTd></Row>
        ))}
      </tbody>
      <tfoot><Row $tone={c.grey}><Td>Số dòng = 3</Td><Td /><Td /><Td $right>4.195.484</Td><Td /></Row></tfoot>
    </Grid>
    <ScrollBar share={52} h={13} />
  </Main>
);

const DialogTools = () => (
  <Tools>
    <Tool $w={31} disabled><Arrow back />Trước</Tool>
    <Tool $w={29} disabled><Arrow />Sau</Tool>
    <Tool $w={32} disabled><Doc grey />Thêm</Tool>
    <Tool $w={28} disabled><Doc grey mark="pen" />Sửa</Tool>
    <Tool $w={25}><Disk />Cất</Tool>
    <Tool $w={28} disabled><Doc grey mark="x" />Xóa</Tool>
    <Tool $w={32}><Undo />Hoãn</Tool>
    <ToolRule />
    <Tool $w={42} disabled><Doc grey />Lập PN</Tool>
    <Tool $w={38} disabled><Doc grey />Lập PX</Tool>
    <ToolRule />
    <Tool $w={32} disabled><Reload />Nạp</Tool>
    <Tool $w={38}><Wrench />Tiện ích</Tool>
    <ToolArrow aria-label="Tiện ích khác"><Tri /></ToolArrow>
    <Tool $w={31}><Template />Mẫu</Tool>
    <ToolArrow aria-label="Chọn mẫu"><Tri /></ToolArrow>
    <ToolRule />
    <Tool $w={25} disabled><Printer />In</Tool>
    <ToolArrow aria-label="Chọn bản in"><Tri color="#777" /></ToolArrow>
    <ToolRule />
    <Tool $w={32}><RoundIcon kind="help" />Giúp</Tool>
    <Tool $w={32}><RoundIcon kind="close" />Đóng</Tool>
  </Tools>
);

const DialogForm = () => (
  <Form>
    <Group>
      <legend>Thông tin chung</legend>
      <Field $w={53}><label htmlFor="note">Diễn giải</label><Memo id="note" /></Field>
      <Field $w={53}><span>Tham chiếu</span><Lookup aria-label="Chọn tham chiếu"><svg width="12" height="12" viewBox="0 0 12 12" fill="none" stroke="#3f6fae"><circle cx="5" cy="5" r="4" fill="#cfeaf5" /><path d="M8 8l3.500 3.500" strokeWidth="1.800" /><path d="M5 3v4M3 5h4" stroke="#222" /></svg></Lookup></Field>
    </Group>
    <Group $w={129}>
      <legend>Chứng từ</legend>
      <Field $w={40}><label htmlFor="date">Ngày</label><Combo><input id="date" defaultValue="19/03/2021" /><Tri /></Combo></Field>
      <Field $w={40}><label htmlFor="no">Số lệnh</label><Combo><input id="no" defaultValue="LSX00002" /></Combo></Field>
      <Field $w={40}><label htmlFor="state">Tình trạng</label><Combo><select id="state"><option>Đang thực hiện</option></select><Tri /></Combo></Field>
    </Group>
  </Form>
);

const Products = () => (
  <>
    <TabRow><Tab $w={66}>Thành phẩm</Tab></TabRow>
    <Grid>
      <colgroup><Col $w={75} /><Col $w={111} /><Col $w={112} /><Col $w={74} /><Col $w={56} /><Col $w={77} /><Col $w={76} /><Col /></colgroup>
      <thead><Row $h={15}><Head label="Mã thành phẩm" left up /><Head label="Tên thành phẩm" /><Head label="Mã quy cách" /><Head label="Số lượng" /><Head label="ĐVT" /><Head label="Đơn đặt hàng" /><Head label="Hợp đồng bán" /><Head label="Đối tượng THCP" left pin={false} /></Row></thead>
      <tbody>
        <Row $tone={c.yellow}><Td $frozen><CellCombo>VT00005<Tri /></CellCombo></Td><Td>Tủ đông</Td><Td /><Td $right>1,00</Td><Td>Cái</Td><Td /><Td /><Td>VT00005</Td></Row>
        <Row><Td $frozen>VT00001</Td><Td>Áo Sơ Mi</Td><Td $shade /><Td $right>1,00</Td><Td>Cái</Td><Td /><Td /><Td /></Row>
        <Row $tone={c.pale}><Td $frozen>Bấm vào đây để thêm mới</Td><Td /><Td $shade /><Td /><Td /><Td /><Td /><Td /></Row>
        {[16, 9].map(h => <Row key={h} $h={h}><Td $frozen /><Td /><Td $shade /><Td /><Td /><Td /><Td /><Td /></Row>)}
      </tbody>
      <tfoot><Row $h={17} $tone={c.grey}><Td $frozen>Số dòng = 2</Td><Td /><Td /><Td $right>2,00</Td><Td colSpan={4} /></Row></tfoot>
    </Grid>
    <ScrollBar share={82} h={14} />
  </>
);

const Materials = () => (
  <>
    <TabRow><Tab $w={197}>Định mức xuất NVL cho thành phẩm: VT00005</Tab></TabRow>
    <Grid>
      <colgroup><Col $w={86} /><Col $w={96} /><Col $w={112} /><Col $w={52} /><Col $w={111} /><Col $w={75} /><Col $w={74} /><Col /></colgroup>
      <thead><Row $h={15}><Head label="Mã nguyên vật liệu" left /><Head label="Tên nguyên vật liệu" /><Head label="Mã quy cách" /><Head label="ĐVT" /><Head label="Số lượng NVL/1 đơn vị SP" left /><Head label="Số lượng NVL" /><Head label="Đối tượng THCP" left /><Head label="Khoản m" left pin={false} /></Row></thead>
      <tbody>
        <Row $tone={c.yellow}><DropTd><DropCell aria-label="Chọn mã hàng"><Tri /></DropCell></DropTd><Td /><Td /><Td /><Td $right>0,00</Td><Td $right>0,00</Td><Td /><Td /></Row>
        {[16, 16, 16, 16, 16, 16, 4].map((h, i) => <Row key={i} $h={h}>{blanks(8).map(k => <Td key={k} />)}</Row>)}
      </tbody>
      <tfoot><Row $h={17} $tone={c.grey}><Td /><Td /><Td /><Td /><Td $right>0,00</Td><Td $right>0,00</Td><Td colSpan={2} /></Row></tfoot>
    </Grid>
    <ScrollBar share={81} h={13} />
  </>
);

const StockPopup = () => (
  <Popup>
    <PopTable>
      <colgroup><Col $w={116} /><Col $w={128} /><Col /></colgroup>
      <thead><tr><th><PopHead><span>Mã hàng</span><Plus /><Magnifier size={9} color="#4c5a8c" /></PopHead></th><th>Tên hàng</th><th>Số lượng tồn</th></tr></thead>
      <tbody>{stock.map(([code, name, qty]) => <tr key={code}><td>{code}</td><td>{name}</td><td>{qty}</td></tr>)}</tbody>
    </PopTable>
    <PopBar><PopKey aria-label="Cuộn lên"><Tri dir="up" /></PopKey><PopTrack /><PopKey aria-label="Cuộn xuống"><Tri /></PopKey></PopBar>
  </Popup>
);

const OrderDialog = () => (
  <Dialog role="dialog" aria-label="Lệnh sản xuất">
    <TitleBar>
      <FormIcon />Lệnh sản xuất - CÔNG TY TNHH ACB<Push />
      <WindowKeys $gap={7}>
        <PlainButton aria-label="Thu nhỏ"><WinGlyph kind="min" color="#d5dcf2" /></PlainButton>
        <PlainButton aria-label="Phóng to"><WinGlyph kind="max" color="#d5dcf2" /></PlainButton>
        <PlainButton aria-label="Đóng"><WinGlyph kind="close" color="#d5dcf2" /></PlainButton>
      </WindowKeys>
    </TitleBar>
    <DialogTools />
    <Content>
      <Heading>Lệnh sản xuất</Heading>
      <DialogForm />
      <Products />
      <Splitter><SplitKey aria-label="Thu gọn"><Tri dir="up" small color="#555" /></SplitKey></Splitter>
      <Materials />
    </Content>
    <Hint>Ctrl + F6 - Nhập mã quy cách<Resize /></Hint>
    <StockPopup />
    <Highlight />
  </Dialog>
);

export default function App() {
  return (
    <Page>
      <Global />
      <Window>
        <TopBars />
        <Body><SidePanel /><MainList /></Body>
        <BottomEdge />
        <OrderDialog />
      </Window>
    </Page>
  );
}
